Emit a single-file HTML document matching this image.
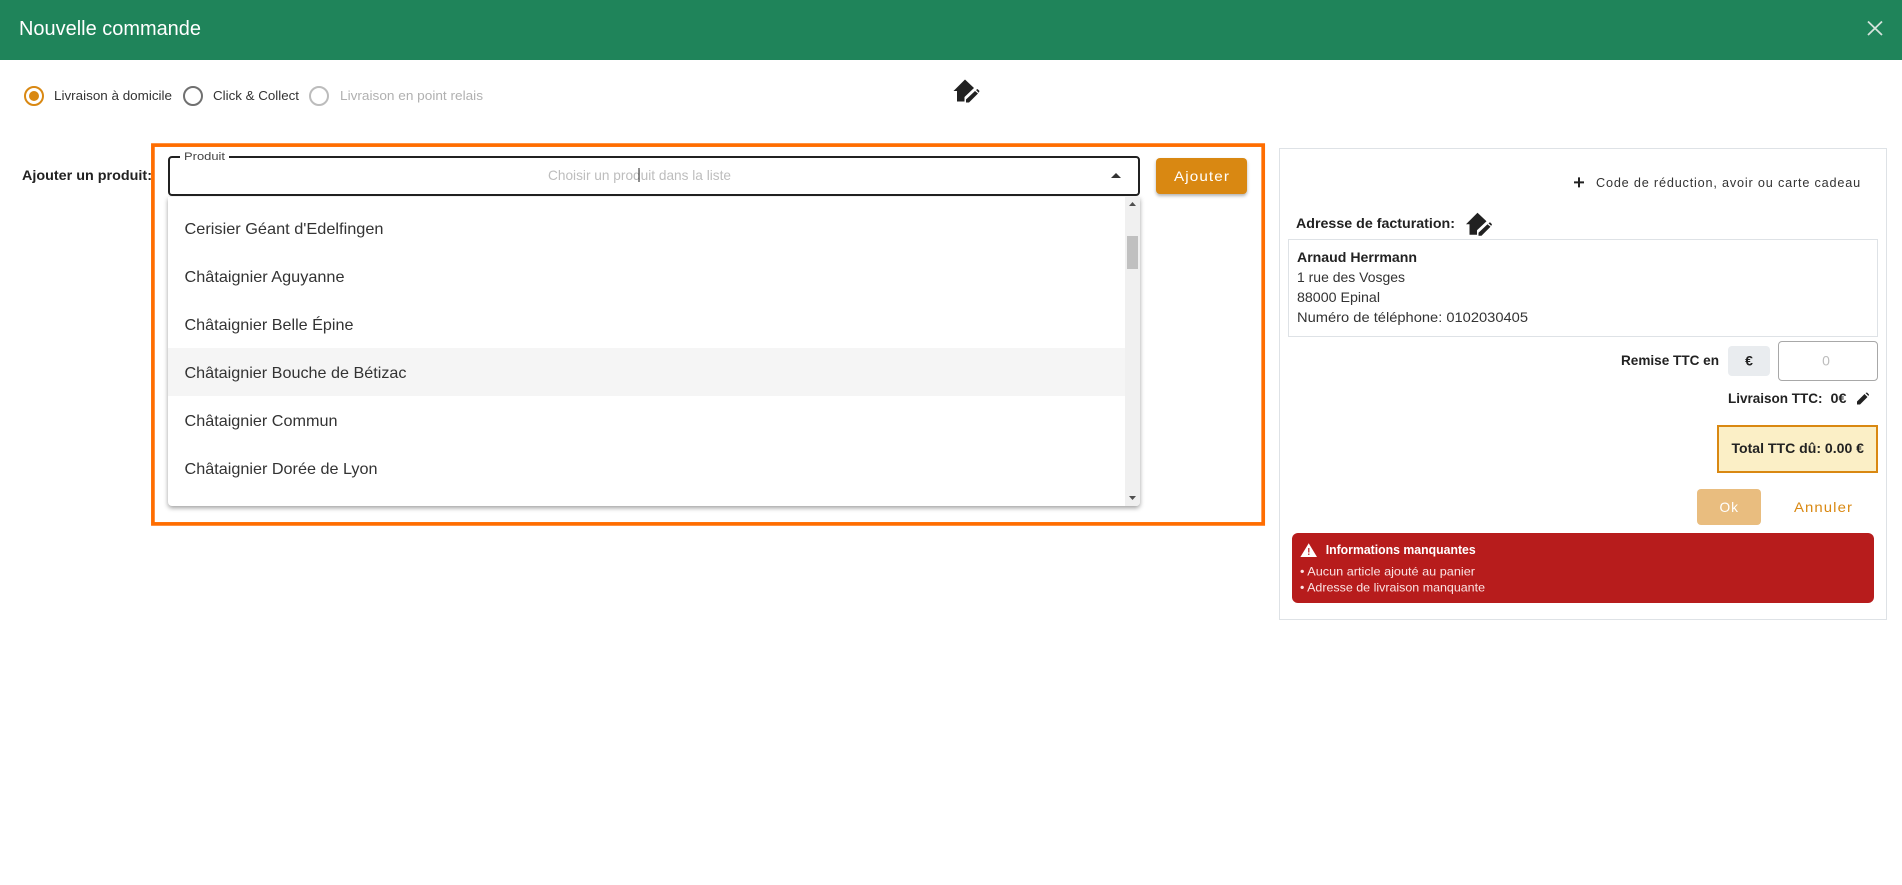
<!DOCTYPE html>
<html lang="fr">
<head>
<meta charset="utf-8">
<title>Nouvelle commande</title>
<style>
html,body{margin:0;padding:0;width:1902px;height:885px;overflow:hidden;background:#fff}
.b{position:absolute;box-sizing:border-box}
svg{position:absolute;left:0;top:0}
text{font-family:"Liberation Sans",sans-serif;fill:#333}
.s{font-weight:700;fill:#222}
</style>
</head>
<body>
<div class="b" style="left:0;top:0;width:1902px;height:60px;background:#1f845a"></div>

<!-- select -->
<div class="b" style="left:168px;top:156px;width:972px;height:40px;border:2px solid #212121;border-radius:4px"></div>
<div class="b" style="left:180px;top:152px;width:49px;height:8px;background:#fff"></div>

<!-- add button -->
<div class="b" style="left:1156px;top:158px;width:91px;height:36px;background:#d98812;border-radius:4px;box-shadow:0 2px 3px rgba(0,0,0,.3)"></div>

<!-- dropdown -->
<div class="b" style="left:168px;top:197px;width:972px;height:309px;background:#fff;border-radius:0 0 4px 4px;box-shadow:0 2px 5px rgba(0,0,0,.38);overflow:hidden">
  <div class="b" style="left:0;top:151px;width:957px;height:48px;background:#f5f5f5"></div>
  <div class="b" style="left:957px;top:0;width:15px;height:309px;background:#f0f0f0"></div>
  <div class="b" style="left:959px;top:39px;width:11px;height:33px;background:#c0c0c0"></div>
</div>

<!-- right panel -->
<div class="b" style="left:1279px;top:148px;width:608px;height:472px;border:1px solid #dee2e6"></div>
<div class="b" style="left:1288px;top:239px;width:590px;height:98px;border:1px solid #dee2e6"></div>
<div class="b" style="left:1728px;top:346px;width:42px;height:30px;background:#e9ecef;border-radius:4px"></div>
<div class="b" style="left:1778px;top:341px;width:100px;height:40px;border:1px solid #a8a8a8;border-radius:4px"></div>
<div class="b" style="left:1717px;top:425px;width:161px;height:48px;background:#fbefc6;border:2px solid #d98812"></div>
<div class="b" style="left:1697px;top:489px;width:64px;height:36px;background:#e9bd7f;border-radius:4px"></div>
<div class="b" style="left:1292px;top:533px;width:582px;height:70px;background:#b71c1c;border-radius:6px"></div>

<svg width="1902" height="885" viewBox="0 0 1902 885" xmlns="http://www.w3.org/2000/svg">
  <!-- orange highlight -->
  <rect x="152.9" y="145.1" width="1110.3" height="378.8" fill="none" stroke="#ff6d00" stroke-width="3.7"/>

  <!-- header -->
  <text x="19" y="35" font-size="20" textLength="182" lengthAdjust="spacingAndGlyphs" style="fill:#fff">Nouvelle commande</text>
  <path d="M1868 21.5 L1882 35 M1882 21.5 L1868 35" stroke="#d5e3dc" stroke-width="1.8" fill="none"/>

  <!-- radios -->
  <circle cx="34" cy="96" r="9" fill="none" stroke="#d98812" stroke-width="2"/>
  <circle cx="34" cy="96" r="5" fill="#d98812"/>
  <text x="54" y="100" font-size="13" textLength="118" lengthAdjust="spacingAndGlyphs">Livraison à domicile</text>
  <circle cx="193" cy="96" r="9" fill="none" stroke="#707070" stroke-width="2"/>
  <text x="213" y="100" font-size="13" textLength="86" lengthAdjust="spacingAndGlyphs">Click &amp; Collect</text>
  <circle cx="319" cy="96" r="9" fill="none" stroke="#bcbcbc" stroke-width="2"/>
  <text x="340" y="100" font-size="13" textLength="143" lengthAdjust="spacingAndGlyphs" style="fill:#b0b0b0">Livraison en point relais</text>

  <!-- top house icon -->
  <g transform="translate(953.5 79.5)" fill="#212121">
    <path d="M11.5 0 L0 11.5 L3.5 11.5 L3.5 22 L11 22 L11 17.5 L20.5 8.5Z"/>
    <path d="M12.5 23 L12.5 20 L21.5 11.5 L24.5 14 L15.5 23Z M22.5 10.5 L24 9.5 L26 11.5 L25.2 13.2Z"/>
  </g>

  <!-- product row -->
  <text x="22" y="180" font-size="14" class="s" textLength="130" lengthAdjust="spacingAndGlyphs">Ajouter un produit:</text>
  <text x="184" y="160" font-size="11" textLength="41" lengthAdjust="spacingAndGlyphs" style="fill:#444">Produit</text>
  <text x="548" y="180" font-size="14" textLength="183" lengthAdjust="spacingAndGlyphs" style="fill:#bdbdbd">Choisir un produit dans la liste</text>
  <rect x="638.5" y="168" width="1" height="14" fill="#222"/>
  <path d="M1111 178 L1116 173 L1121 178Z" fill="#333"/>
  <text x="1174" y="181" font-size="14" letter-spacing="1" textLength="56" lengthAdjust="spacingAndGlyphs" style="fill:#fff">Ajouter</text>

  <!-- dropdown text -->
  <text x="184.5" y="234" font-size="16" textLength="199" lengthAdjust="spacingAndGlyphs">Cerisier Géant d'Edelfingen</text>
  <text x="184.5" y="282" font-size="16" textLength="160" lengthAdjust="spacingAndGlyphs">Châtaignier Aguyanne</text>
  <text x="184.5" y="330" font-size="16" textLength="169" lengthAdjust="spacingAndGlyphs">Châtaignier Belle Épine</text>
  <text x="184.5" y="378" font-size="16" textLength="222" lengthAdjust="spacingAndGlyphs">Châtaignier Bouche de Bétizac</text>
  <text x="184.5" y="426" font-size="16" textLength="153" lengthAdjust="spacingAndGlyphs">Châtaignier Commun</text>
  <text x="184.5" y="474" font-size="16" textLength="193" lengthAdjust="spacingAndGlyphs">Châtaignier Dorée de Lyon</text>
  <path d="M1129 206 L1132.5 202 L1136 206Z" fill="#505050"/>
  <path d="M1129 496 L1136 496 L1132.5 500Z" fill="#505050"/>

  <!-- right panel -->
  <path d="M1574 181.4h4v-4h2v4h4v2h-4v4h-2v-4h-4z" fill="#222"/>
  <text x="1596" y="187" font-size="12.5" letter-spacing="0.8" textLength="265" lengthAdjust="spacingAndGlyphs">Code de réduction, avoir ou carte cadeau</text>

  <text x="1296" y="228" font-size="14" class="s" textLength="159" lengthAdjust="spacingAndGlyphs">Adresse de facturation:</text>
  <g transform="translate(1466 212.7)" fill="#212121">
    <path d="M11.5 0 L0 11.5 L3.5 11.5 L3.5 22 L11 22 L11 17.5 L20.5 8.5Z"/>
    <path d="M12.5 23 L12.5 20 L21.5 11.5 L24.5 14 L15.5 23Z M22.5 10.5 L24 9.5 L26 11.5 L25.2 13.2Z"/>
  </g>

  <text x="1297" y="262" font-size="14" class="s" textLength="120" lengthAdjust="spacingAndGlyphs">Arnaud Herrmann</text>
  <text x="1297" y="282" font-size="14" textLength="108" lengthAdjust="spacingAndGlyphs">1 rue des Vosges</text>
  <text x="1297" y="302" font-size="14" textLength="83" lengthAdjust="spacingAndGlyphs">88000 Epinal</text>
  <text x="1297" y="322" font-size="14" textLength="231" lengthAdjust="spacingAndGlyphs">Numéro de téléphone: 0102030405</text>

  <text x="1621" y="365" font-size="14" class="s" textLength="98" lengthAdjust="spacingAndGlyphs">Remise TTC en</text>
  <text x="1749" y="365.5" font-size="14" class="s" text-anchor="middle">€</text>
  <text x="1826" y="365.5" font-size="14" text-anchor="middle" style="fill:#bdbdbd">0</text>

  <text x="1728" y="403" font-size="14" class="s" textLength="94.5" lengthAdjust="spacingAndGlyphs">Livraison TTC:</text>
  <text x="1830.5" y="403" font-size="14" class="s" textLength="16" lengthAdjust="spacingAndGlyphs">0€</text>
  <path d="M1857 404.5 L1857 401.5 L1864.5 394 L1867.5 397 L1860 404.5Z M1865.5 393 L1867 392.5 L1869 394.5 L1868.5 396Z" fill="#212121"/>

  <text x="1731.5" y="453" font-size="14" class="s" textLength="132.5" lengthAdjust="spacingAndGlyphs">Total TTC dû: 0.00 €</text>

  <text x="1719.5" y="512" font-size="14" letter-spacing="1" textLength="19.5" lengthAdjust="spacingAndGlyphs" style="fill:#fff">Ok</text>
  <text x="1794" y="512" font-size="14" letter-spacing="1" textLength="59" lengthAdjust="spacingAndGlyphs" style="fill:#d98812">Annuler</text>

  <!-- alert -->
  <path d="M1308.7 543.3 L1317 557 L1300.4 557Z" fill="#fff"/>
  <rect x="1308.2" y="548" width="1.2" height="4.5" fill="#b71c1c"/>
  <rect x="1308.2" y="553.5" width="1.2" height="1.5" fill="#b71c1c"/>
  <text x="1325.7" y="554" font-size="13" class="s" textLength="150" lengthAdjust="spacingAndGlyphs" style="fill:#fff">Informations manquantes</text>
  <text x="1300" y="575.3" font-size="12" textLength="175" lengthAdjust="spacingAndGlyphs" style="fill:#fbe3e3">• Aucun article ajouté au panier</text>
  <text x="1300" y="591.3" font-size="12" textLength="185" lengthAdjust="spacingAndGlyphs" style="fill:#fbe3e3">• Adresse de livraison manquante</text>
</svg>
</body>
</html>
